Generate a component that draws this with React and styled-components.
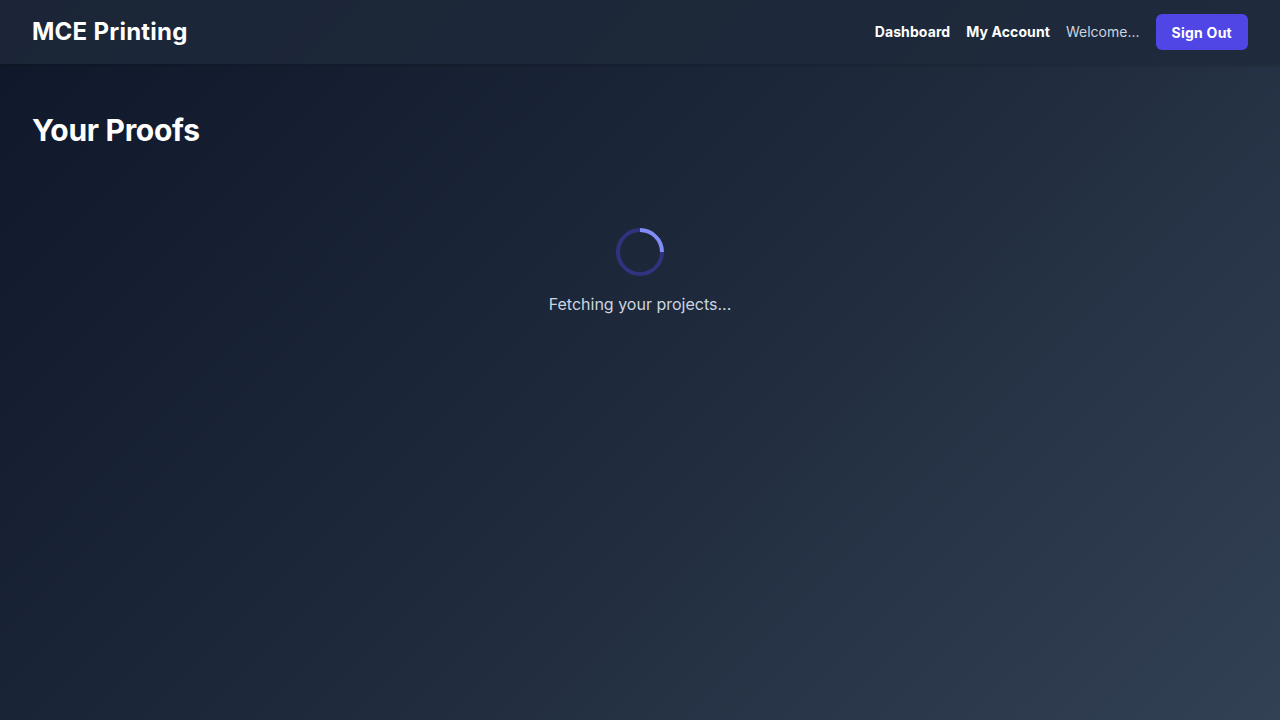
import styled, { createGlobalStyle } from 'styled-components';

const Global = createGlobalStyle`
  * { box-sizing: border-box; }
  html, body { margin: 0; padding: 0; }
  body {
    font-family: Inter, "Noto Sans", sans-serif;
    color: #fff;
    background: #0f172a;
  }
`;

const App = () => {
  return (
    <S.Page>
      <Global />
      <S.Header>
        <S.Logo>MCE Printing</S.Logo>
        <S.Nav>
          <S.NavLink href="#">Dashboard</S.NavLink>
          <S.NavLink href="#">My Account</S.NavLink>
          <S.Welcome>Welcome...</S.Welcome>
          <S.SignOut>Sign Out</S.SignOut>
        </S.Nav>
      </S.Header>
      <S.Main>
        <S.Title>Your Proofs</S.Title>
        <S.Loading>
          <S.Spinner />
          <S.LoadingText>Fetching your projects...</S.LoadingText>
        </S.Loading>
      </S.Main>
    </S.Page>
  );
};

export default App;

const S = {
  Page: styled.div`
    min-height: 100vh;
    background: linear-gradient(135deg, #0f172a 0%, #1e293b 50%, #334155 100%);
  `,
  Header: styled.header`
    height: 64px;
    display: flex;
    align-items: center;
    justify-content: space-between;
    padding: 0 32px;
    background: rgba(30, 41, 59, 0.8);
    box-shadow: 0 1px 3px rgba(0, 0, 0, 0.2);
  `,
  Logo: styled.h1`
    margin: 0;
    font-size: 24px;
    line-height: 32px;
    font-weight: 700;
    letter-spacing: 0.25px;
  `,
  Nav: styled.nav`
    display: flex;
    align-items: center;
    gap: 16px;
    line-height: 20px;
  `,
  NavLink: styled.a`
    color: #fff;
    text-decoration: none;
    font-size: 14px;
    font-weight: 700;
    letter-spacing: 0.1px;
  `,
  Welcome: styled.span`
    color: #cbd5e1;
    font-size: 14px;
  `,
  SignOut: styled.button`
    background: #4f46e5;
    color: #fff;
    border: none;
    border-radius: 6px;
    padding: 0 16px;
    height: 36px;
    font-family: inherit;
    font-size: 14px;
    font-weight: 700;
    letter-spacing: 0.25px;
  `,
  Main: styled.main`
    padding: 48px 32px;
  `,
  Title: styled.h2`
    margin: 0;
    font-size: 30px;
    line-height: 36px;
    font-weight: 700;
    letter-spacing: -0.3px;
  `,
  Loading: styled.div`
    display: flex;
    flex-direction: column;
    align-items: center;
    gap: 16px;
    padding: 80px 0;
  `,
  Spinner: styled.div`
    width: 48px;
    height: 48px;
    border-radius: 50%;
    border: 4px solid rgba(79, 70, 229, 0.4);
    border-top-color: #818cf8;
    transform: rotate(45deg);
  `,
  LoadingText: styled.p`
    margin: 0;
    color: #cbd5e1;
    font-size: 16px;
    line-height: 24px;
  `,
};
